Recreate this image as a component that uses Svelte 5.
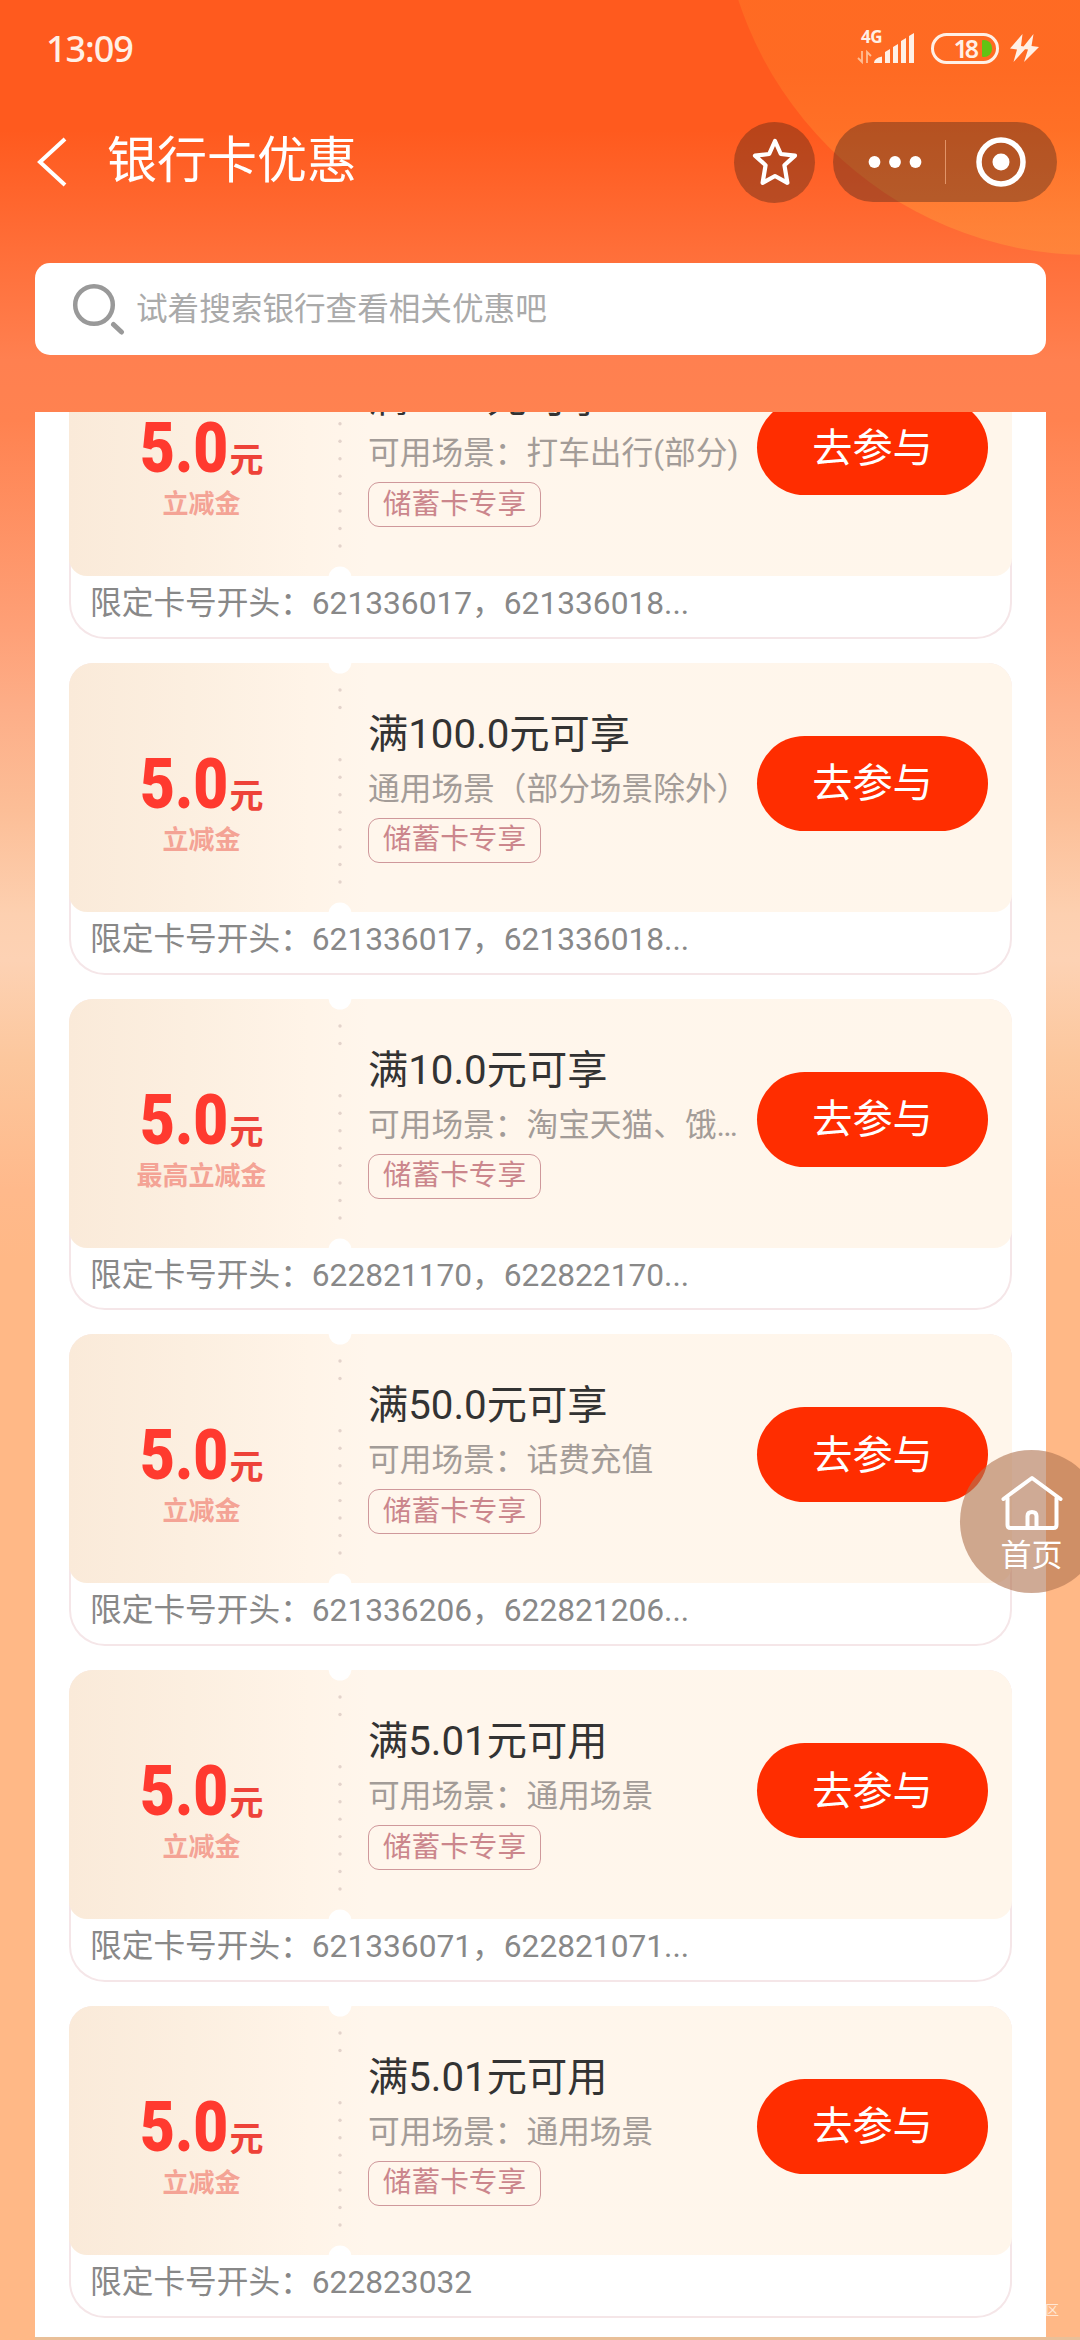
<script>
  const coupons = [
    { title: '满10.0元可享', scene: '可用场景：打车出行(部分)', kind: '立减金', cards: '621336017，621336018...' },
    { title: '满100.0元可享', scene: '通用场景（部分场景除外）', kind: '立减金', cards: '621336017，621336018...' },
    { title: '满10.0元可享', scene: '可用场景：淘宝天猫、饿…', kind: '最高立减金', cards: '622821170，622822170...' },
    { title: '满50.0元可享', scene: '可用场景：话费充值', kind: '立减金', cards: '621336206，622821206...' },
    { title: '满5.01元可用', scene: '可用场景：通用场景', kind: '立减金', cards: '621336071，622821071...' },
    { title: '满5.01元可用', scene: '可用场景：通用场景', kind: '立减金', cards: '622823032' }
  ];
  const dots = [0, 1, 4, 5, 6, 7, 8, 9, 10, 11];
</script>

<div class="page">
  <div class="glow"></div>

  <header class="status">
    <span class="time">13:09</span>
    <div class="indicators">
      <div class="network">
        <span class="gen">4G</span>
        <svg class="signal" width="60" height="34" viewBox="0 0 60 34">
          <path d="M6 20v11l-4-4M11 32V21l4 4" fill="none" stroke="#ffbd94" stroke-width="1.8" />
          <path d="M18 32q0-5 8-6.500V32zM29 32V21l5-3v14zM37 32V16l5-3v19zM45 32V10l5-3v25zM53 32V5l5-3v30z" fill="#fff0e6" />
        </svg>
      </div>
      <div class="battery"><span>18</span><i></i></div>
      <svg width="29" height="28" viewBox="0 0 29 28">
        <path d="M12.500 0L0 14.500l7 1L3.500 28 17 13l-6-1zM23.500 0L12 14.500l6 1L14 28l15-15-7.500-1z" fill="#fff0e6" />
      </svg>
    </div>
  </header>

  <nav class="bar">
    <svg class="back" width="30" height="50" viewBox="0 0 30 50">
      <path d="M28 2L3 25l25 23" fill="none" stroke="#fff" stroke-width="4" />
    </svg>
    <h1>银行卡优惠</h1>
    <div class="star">
      <svg width="46" height="50" viewBox="0 0 46 50">
        <path d="M23 4l5.800 13 14.200 1.600-10.600 9.600 3 17.600L23 39l-12.400 6.800 3-17.600L3 18.600 17.200 17z" fill="none" stroke="#fff" stroke-width="4.200" stroke-linejoin="round" />
      </svg>
    </div>
    <div class="capsule">
      <svg width="54" height="14" viewBox="0 0 54 14">
        <g fill="#fff"><circle cx="6.500" cy="7" r="5.900" /><circle cx="27" cy="7" r="5.900" /><circle cx="47.500" cy="7" r="5.900" /></g>
      </svg>
      <span class="rule"></span>
      <svg width="52" height="52" viewBox="0 0 52 52">
        <circle cx="26" cy="26" r="22" fill="none" stroke="#fff" stroke-width="5.500" />
        <circle cx="26" cy="26" r="8.500" fill="#fff" />
      </svg>
    </div>
  </nav>

  <div class="search">
    <svg width="54" height="54" viewBox="0 0 54 54">
      <circle cx="23" cy="23" r="18.800" fill="none" stroke="#999" stroke-width="4.500" />
      <path d="M42.500 42.500l8 7.500" stroke="#999" stroke-width="5" stroke-linecap="round" />
    </svg>
    <span>试着搜索银行查看相关优惠吧</span>
  </div>

  <main class="panel">
    <div class="list">
      {#each coupons as c}
        <article class="coupon">
          <section class="ticket">
            <svg class="perforation" width="30" height="249" viewBox="0 0 30 249">
              <circle cx="15" cy="-1" r="11.500" fill="#fff" />
              <circle cx="15" cy="251" r="11.500" fill="#fff" />
              {#each dots as d}
                <circle cx="15" cy={27 + d * 17.450} r="1.700" fill="#e3d3cb" />
              {/each}
            </svg>
            <div class="amount">
              <p class="price"><b>5.0</b><span>元</span></p>
              <p class="kind">{c.kind}</p>
            </div>
            <div class="info">
              <h2>{c.title}</h2>
              <p class="scene">{c.scene}</p>
              <span class="tag">储蓄卡专享</span>
            </div>
            <button>去参与</button>
          </section>
          <p class="numbers">限定卡号开头：{c.cards}</p>
        </article>
      {/each}
    </div>
  </main>
  <div class="footline"></div>

  <aside class="home">
    <svg width="62" height="56" viewBox="0 0 62 56">
      <g fill="none" stroke="#fff" stroke-width="4" stroke-linejoin="round" stroke-linecap="round">
        <path d="M2.500 24L31 3l28.500 21" />
        <path d="M6.500 23v27q0 3 3 3h43q3 0 3-3V23" />
        <path d="M26.500 52V41q0-4 4.500-4t4.500 4v11" />
      </g>
    </svg>
    <span>首页</span>
  </aside>
  <span class="mark">区</span>
</div>

<style>
  :global(body) {
    margin: 0;
  }
  .page {
    position: relative;
    box-sizing: border-box;
    width: 1080px;
    height: 2340px;
    overflow: hidden;
    display: flex;
    flex-direction: column;
    font-family: Roboto, 'Noto Sans CJK SC', sans-serif;
    font-weight: 400;
    background: linear-gradient(#ff5a1e 0, #ff5a1e 130px, #ff6a33 225px, #ff8050 360px, #ff8250 420px, #fea077 630px, #fdae88 710px, #fcbe97 810px, #fdd0b0 915px, #fdd2b4 960px, #fcc79d 1060px, #ffb98b 1190px, #ffb886 1260px, #ffb886 100%);
  }
  h1, h2, p {
    margin: 0;
    font-weight: 400;
  }
  svg {
    display: block;
    flex: none;
  }
  .glow {
    position: absolute;
    left: 720px;
    top: -485px;
    width: 740px;
    height: 740px;
    border-radius: 50%;
    background: linear-gradient(rgba(255, 138, 44, 0.34) 75%, rgba(255, 156, 60, 0.46) 96%);
  }
  .status {
    position: relative;
    height: 96px;
    display: flex;
    justify-content: space-between;
    padding: 0 41px 0 46px;
    align-items: center;
    color: #fff0e6;
  }
  .time {
    font: 500 36px/40px 'Noto Sans', sans-serif;
    letter-spacing: -1.100px;
    padding-top: 2px;
  }
  .indicators {
    display: flex;
    align-items: center;
    gap: 11px;
  }
  .network {
    position: relative;
    margin-right: 4px;
  }
  .gen {
    position: absolute;
    left: 5px;
    top: -2px;
    font: 700 17px/16px 'Noto Sans', sans-serif;
    letter-spacing: -0.500px;
  }
  .battery {
    box-sizing: border-box;
    width: 68px;
    height: 31px;
    border: 3px solid #fff0e6;
    border-radius: 16px;
    display: flex;
    align-items: center;
    justify-content: flex-end;
    gap: 6px;
    padding-right: 4px;
    font: 600 25px/24px 'Noto Sans', sans-serif;
    letter-spacing: -3px;
  }
  .battery i {
    width: 10px;
    height: 17px;
    border-radius: 1px 8px 8px 1px;
    background: #63c313;
  }
  .bar {
    position: relative;
    height: 132px;
    display: flex;
    align-items: center;
    padding: 0 23px 0 37px;
    color: #fff;
  }
  h1 {
    flex: 1;
    margin-left: 40px;
    font-size: 50px;
    line-height: 64px;
    padding-bottom: 2px;
  }
  .star {
    width: 81px;
    height: 81px;
    border-radius: 50%;
    background: rgba(60, 30, 20, 0.36);
    display: grid;
    place-items: center;
  }
  .capsule {
    box-sizing: border-box;
    width: 224px;
    height: 80px;
    border-radius: 40px;
    margin-left: 18px;
    padding: 0 30px 0 35px;
    background: rgba(60, 35, 25, 0.38);
    display: flex;
    align-items: center;
    justify-content: space-between;
  }
  .rule {
    width: 1px;
    height: 44px;
    margin-left: -7px;
    background: rgba(255, 190, 150, 0.6);
  }
  .search {
    position: relative;
    box-sizing: border-box;
    height: 92px;
    margin: 35px 34px 57px 35px;
    padding-left: 36px;
    border-radius: 15px;
    background: #fff;
    display: flex;
    align-items: center;
    gap: 11px;
    color: #aaa;
    font-size: 31.600px;
  }
  .search span {
    margin-top: -7px;
  }
  .panel {
    height: 1925px;
    margin: 0 34px 0 35px;
    background: #fff;
    overflow: hidden;
  }
  .list {
    margin-top: -85px;
    padding: 0 34px;
    display: flex;
    flex-direction: column;
    gap: 24px;
  }
  .coupon {
    box-sizing: border-box;
    height: 311.750px;
    border-radius: 24px 24px 36px 36px;
    box-shadow: inset 0 0 0 2px #f5e6e8;
  }
  .ticket {
    position: relative;
    box-sizing: border-box;
    height: 249px;
    border-radius: 24px 24px 18px 18px;
    background: linear-gradient(90deg, #faead9 0, #fcefe0 120px, #fff4e8 240px, #fff6ec 300px, #fff6eb 100%);
    display: flex;
    padding-right: 24px;
  }
  .perforation {
    position: absolute;
    left: 256px;
    top: 0;
  }
  .amount {
    box-sizing: border-box;
    width: 265px;
    padding-top: 81px;
    text-align: center;
  }
  .price {
    height: 80px;
    display: flex;
    justify-content: center;
    align-items: baseline;
    color: #ff3a2f;
    line-height: 80px;
  }
  .price b {
    font-size: 71px;
    font-weight: 900;
    width: 90px;
    transform: scaleX(0.850);
    transform-origin: left;
  }
  .price span {
    font-size: 34px;
    font-weight: 700;
    color: #ee4238;
  }
  .kind {
    font-size: 26px;
    line-height: 32px;
    font-weight: 700;
    color: #f4a395;
  }
  .info {
    flex: 1;
    padding: 46px 0 0 34px;
    white-space: nowrap;
    width: 0;
  }
  h2 {
    font-size: 40.250px;
    line-height: 52px;
    color: #333;
  }
  .scene {
    margin-top: 8px;
    font-size: 31.700px;
    line-height: 42px;
    color: #a39c98;
  }
  .tag {
    box-sizing: border-box;
    display: inline-flex;
    width: 173px;
    height: 45px;
    margin-top: 7px;
    padding-bottom: 7px;
    justify-content: center;
    align-items: center;
    border: 1.500px solid #cf989b;
    border-radius: 11px;
    font-size: 28.700px;
    color: #cb868c;
  }
  button {
    width: 231px;
    height: 95px;
    margin-top: 73px;
    border: 0;
    border-radius: 48px;
    padding: 0 0 7px;
    background: #ff2d00;
    color: #fff;
    font: inherit;
    font-size: 40.200px;
  }
  .numbers {
    padding-left: 21px;
    font-size: 31.700px;
    line-height: 55px;
    color: #888;
  }
  .footline {
    height: 3px;
    margin-left: 35px;
    background: #e9bf98;
  }
  .home {
    position: absolute;
    left: 960px;
    top: 1450px;
    box-sizing: border-box;
    width: 143px;
    height: 143px;
    padding-top: 25px;
    border-radius: 50%;
    background: rgba(177, 117, 83, 0.615);
    display: flex;
    flex-direction: column;
    align-items: center;
    color: #fff;
    font-size: 31px;
    line-height: 49px;
  }
  .mark {
    position: absolute;
    left: 1045px;
    top: 2300px;
    font-size: 14px;
    line-height: 20px;
    color: #ffe8d6;
  }
</style>
